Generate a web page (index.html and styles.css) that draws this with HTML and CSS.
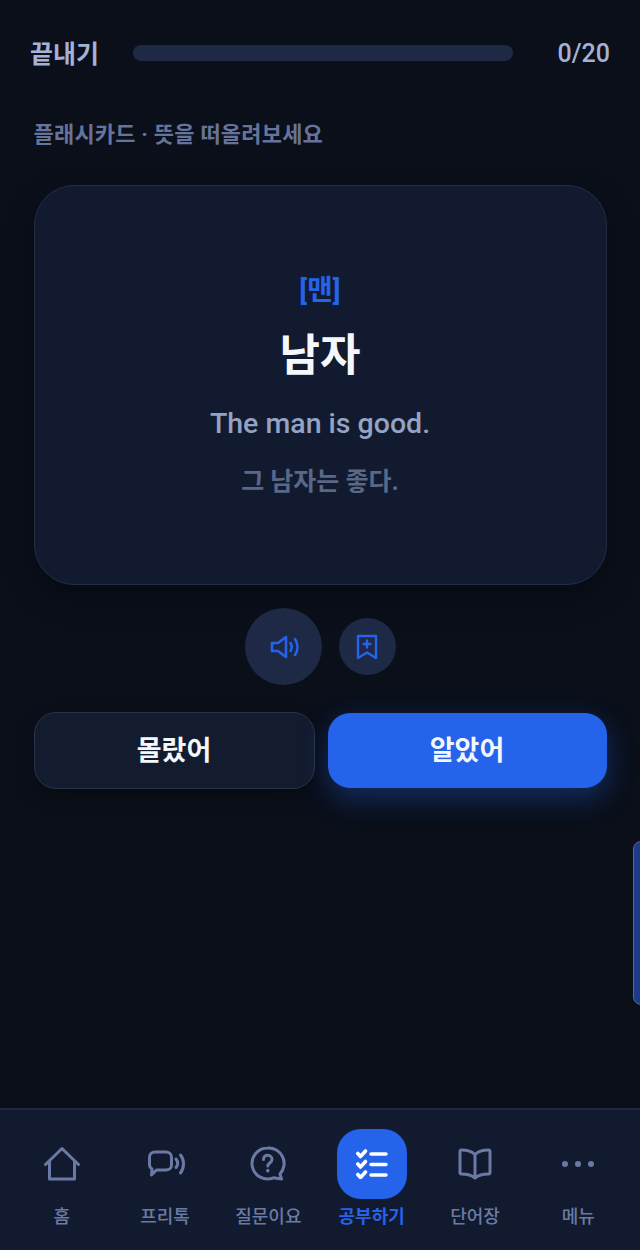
FILE: index.html
```html
<!DOCTYPE html>
<html lang="ko">
<head>
<meta charset="utf-8">
<title>플래시카드</title>
<link rel="stylesheet" href="styles.css">
</head>
<body>
<div class="app">
  <header class="top">
    <span class="quit">끝내기</span>
    <div class="bar"></div>
    <span class="count">0/20</span>
  </header>
  <main class="main">
    <p class="hint">플래시카드 · 뜻을 떠올려보세요</p>
    <section class="card">
      <div class="pron">[맨]</div>
      <div class="word">남자</div>
      <div class="en">The man is good.</div>
      <div class="ko">그 남자는 좋다.</div>
    </section>
    <div class="tools">
      <button class="round big" aria-label="듣기">
        <svg class="spk" width="30" height="24" viewBox="0 0 30 24" fill="none" stroke="#2563eb" stroke-width="2.600" stroke-linejoin="round" stroke-linecap="round"><path d="M2 8h6l8-6v20l-8-6H2z"/><path d="M20.500 8c1.500 2.500 1.500 5.500 0 8"/><path d="M25 4c3.200 4.800 3.200 11.200 0 16"/></svg>
      </button>
      <button class="round small" aria-label="저장">
        <svg width="22" height="26" viewBox="0 0 22 26" fill="none" stroke="#2563eb" stroke-width="2.400" stroke-linejoin="round" stroke-linecap="round"><path d="M2 2h18v22l-9-5.500L2 24z"/><path d="M11 6.500v7M7.500 10h7"/></svg>
      </button>
    </div>
    <div class="actions">
      <button class="btn no">몰랐어</button>
      <button class="btn yes">알았어</button>
    </div>
  </main>
  <div class="side-tab"></div>
  <nav class="nav">
    <a class="item">
      <span class="ico"><svg width="38" height="38" viewBox="0 0 38 38" fill="none" stroke="#6b7aa5" stroke-width="3" stroke-linejoin="round" stroke-linecap="round"><path d="M2.500 19.500 19 3.500l16.500 16"/><path d="M6.500 16.500V34h25V16.500"/></svg></span>
      <span class="lbl">홈</span>
    </a>
    <a class="item">
      <span class="ico"><svg class="talk" width="40" height="30" viewBox="0 0 40 30" fill="none" stroke="#6b7aa5" stroke-width="3" stroke-linejoin="round" stroke-linecap="round"><path d="M8 3h11c3 0 5.500 2 5.500 5v8c0 3-2.500 5-5.500 5H9.500L4.500 26l.5-6C3.500 19 2.500 17.500 2.500 16V8C2.500 5 5 3 8 3z"/><path d="M29 10c2 2.500 2 6 0 8.500"/><path d="M33.500 6c4 4.500 4 12.500 0 18"/></svg></span>
      <span class="lbl">프리톡</span>
    </a>
    <a class="item">
      <span class="ico"><svg width="36" height="36" viewBox="0 0 36 36" fill="none" stroke="#6b7aa5" stroke-width="3" stroke-linejoin="round" stroke-linecap="round"><path d="M17.500 2a15.500 15.500 0 1 0 6 29.800l8 1.200-1.500-5A15.500 15.500 0 0 0 17.500 2z"/><path d="M13.500 13.500c0-6 8.500-5.500 8.500 0 0 3.500-4.200 3.500-4.200 6.500" stroke-width="3"/><path d="M17.800 24.500v.3" stroke-width="3.500"/></svg></span>
      <span class="lbl">질문이요</span>
    </a>
    <a class="item active">
      <span class="ico"><svg width="32" height="30" viewBox="0 0 32 30" fill="none" stroke="#fff" stroke-linecap="round" stroke-linejoin="round"><path d="M1.800 4.500 4.500 7.500 9.500 2M1.800 15 4.500 18 9.500 12.500M1.800 25.500 4.500 28.500 9.500 23" stroke-width="3.600"/><path d="M15 5h15M15 15.500h15M15 26h15" stroke-width="3.400"/></svg></span>
      <span class="lbl">공부하기</span>
    </a>
    <a class="item">
      <span class="ico"><svg width="34" height="32" viewBox="0 0 34 32" fill="none" stroke="#6b7aa5" stroke-width="3" stroke-linejoin="round" stroke-linecap="round"><path d="M17 6.500C13.500 3 8 2 3.500 2 2.500 2 2 2.500 2 3.500v21c0 1 .5 1.500 1.500 1.500 5 0 9.500.5 13.500 4 4-3.500 8.500-4 13.500-4 1 0 1.500-.5 1.500-1.500v-21c0-1-.5-1.500-1.500-1.500C26 2 20.500 3 17 6.500zM17 6.500V30"/></svg></span>
      <span class="lbl">단어장</span>
    </a>
    <a class="item">
      <span class="ico"><svg width="32" height="6" viewBox="0 0 32 6" fill="#6b7aa5"><circle cx="3" cy="3" r="3"/><circle cx="16" cy="3" r="3"/><circle cx="29" cy="3" r="3"/></svg></span>
      <span class="lbl">메뉴</span>
    </a>
  </nav>
</div>
</body>
</html>
```
FILE: styles.css
```css
* { box-sizing: border-box; }
html, body { margin: 0; padding: 0; }
body {
  background: #0a0f1a;
  font-family: Roboto, "Noto Sans CJK KR", sans-serif;
  color: #fff;
}
.app {
  position: relative;
  width: 640px;
  height: 1250px;
  display: flex;
  flex-direction: column;
  overflow: hidden;
}
.top {
  display: flex;
  align-items: center;
  height: 106px;
  padding: 0 30px;
}
.quit {
  width: 103px;
  padding-bottom: 3px;
  font-size: 25px;
  font-weight: 700;
  color: #a5b2d6;
}
.bar {
  width: 380px;
  height: 16px;
  border-radius: 8px;
  background: #1e2945;
}
.count {
  margin-left: auto;
  font-size: 25px;
  font-weight: 500;
  color: #a5b2d6;
}
.main {
  flex: 1;
  display: flex;
  flex-direction: column;
  padding: 0 33.5px;
}
.hint {
  margin: 14px 0 0;
  height: 65px;
  font-size: 22px;
  line-height: 30px;
  font-weight: 700;
  color: #66749c;
  letter-spacing: 0.2px;
}
.card {
  height: 400px;
  border: 1px solid #232d45;
  border-radius: 40px;
  background: #111a2e;
  box-shadow: 0 12px 30px rgba(0, 0, 0, 0.35);
  display: flex;
  flex-direction: column;
  align-items: center;
  padding-top: 85px;
}
.pron {
  font-size: 28px;
  line-height: 40px;
  font-weight: 700;
  color: #2563eb;
}
.word {
  margin-top: 15px;
  font-size: 44px;
  line-height: 60px;
  font-weight: 700;
  color: #f4f7fc;
}
.en {
  margin-top: 16px;
  font-size: 28.500px;
  line-height: 44px;
  font-weight: 500;
  color: #94a3c4;
}
.ko {
  margin-top: 16px;
  font-size: 25px;
  line-height: 40px;
  font-weight: 700;
  color: #5a6888;
}
.tools {
  margin-top: 23px;
  display: flex;
  justify-content: center;
  align-items: center;
  gap: 17px;
}
.round {
  display: flex;
  align-items: center;
  justify-content: center;
  border: 0;
  padding: 0;
  border-radius: 50%;
  background: #1e2945;
}
.big { width: 77px; height: 77px; }
.small { width: 57px; height: 57px; }
.spk { margin-left: 3px; }
.talk { margin-left: 4px; }
.actions {
  margin-top: 27px;
  display: flex;
  gap: 13px;
}
.btn {
  font-family: inherit;
  font-size: 27px;
  font-weight: 700;
  color: #f4f7fc;
  border-radius: 22px;
  height: 77px;
  flex: 1;
  padding: 0 0 4px;
}
.no {
  background: #131b2e;
  border: 1px solid #2a3349;
  box-shadow: 0 8px 20px rgba(0, 0, 0, 0.3);
}
.yes {
  margin: 1px 0;
  height: 75px;
  background: #2563eb;
  border: 0;
  box-shadow: 0 10px 28px rgba(37, 99, 235, 0.35);
}
.side-tab {
  position: absolute;
  right: -10px;
  top: 841px;
  width: 17px;
  height: 164px;
  background: #1e3a8a;
  border: 1px solid #56688f;
  border-radius: 8px;
}
.nav {
  height: 142px;
  padding: 0 10px;
  border-top: 2px solid #1c2740;
  background: #111a2e;
  display: grid;
  grid-template-columns: repeat(6, 1fr);
}
.item {
  display: flex;
  flex-direction: column;
  align-items: center;
  padding-top: 19px;
}
.ico {
  width: 70px;
  height: 70px;
  border-radius: 24px;
  display: flex;
  align-items: center;
  justify-content: center;
}
.lbl {
  margin-top: 4px;
  font-size: 18px;
  line-height: 28px;
  font-weight: 500;
  color: #6b7aa5;
}
.active .ico { background: #2563eb; }
.active .lbl { color: #2563eb; font-weight: 700; }
```
